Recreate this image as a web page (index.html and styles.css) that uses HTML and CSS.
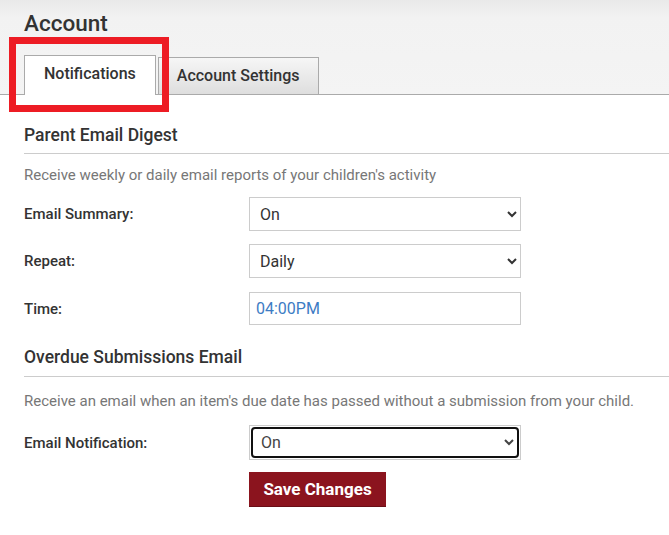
FILE: index.html
```html
<!DOCTYPE html>
<html lang="en">
<head>
<meta charset="utf-8">
<title>Account</title>
<link rel="stylesheet" href="styles.css">
</head>
<body>
<header class="header">
  <h1 class="page-title">Account</h1>
  <ul class="tabs">
    <li class="tab tab-active">Notifications</li>
    <li class="tab">Account Settings</li>
  </ul>
  <div class="highlight"></div>
</header>
<main class="content">
  <section class="section">
    <h2 class="section-title">Parent Email Digest</h2>
    <p class="section-desc">Receive weekly or daily email reports of your children's activity</p>
    <div class="row">
      <label class="row-label">Email Summary:</label>
      <select class="field field-select"><option>On</option><option>Off</option></select>
    </div>
    <div class="row row-tall">
      <label class="row-label">Repeat:</label>
      <select class="field field-select"><option>Daily</option><option>Weekly</option></select>
    </div>
    <div class="row">
      <label class="row-label">Time:</label>
      <input class="field field-input" type="text" value="04:00PM">
    </div>
  </section>
  <section class="section section-second">
    <h2 class="section-title">Overdue Submissions Email</h2>
    <p class="section-desc desc-second">Receive an email when an item's due date has passed without a submission from your child.</p>
    <div class="row row-last">
      <label class="row-label">Email Notification:</label>
      <span class="focus-wrap"><select class="field-select field-focused"><option>On</option><option>Off</option></select></span>
    </div>
    <div class="actions">
      <button class="btn-save" type="button">Save Changes</button>
    </div>
  </section>
</main>
</body>
</html>
```
FILE: styles.css
```css
* { box-sizing: border-box; }
html, body { margin: 0; padding: 0; background: #fff; }
body {
  font-family: Roboto, "Liberation Sans", Arial, sans-serif;
  color: #333;
  width: 669px;
  overflow: hidden;
}
.header {
  position: relative;
  background: linear-gradient(#e9e9e9 0px, #f2f2f2 18px, #f4f4f4 100%);
}
.page-title {
  margin: 0;
  padding: 10px 0 0 24px;
  font-size: 22.5px;
  line-height: 26px;
  font-weight: 500;
  color: #333;
}
.tabs {
  list-style: none;
  margin: 19px 0 0 0;
  padding: 0 0 0 24px;
  display: flex;
  align-items: flex-end;
  gap: 2px;
  border-bottom: 1px solid #aaa;
  height: 40px;
}
.tab {
  border: 1px solid #aaa;
  border-bottom: none;
  padding: 0 18px;
  height: 37px;
  line-height: 36px;
  font-size: 16px;
  font-weight: 500;
  color: #333;
  background: linear-gradient(#f6f6f6, #dedede);
}
.tab-active {
  background: #fff;
  height: 40px;
  line-height: 36px;
  padding: 0 19px 3px;
  margin-bottom: -1px;
}
.highlight {
  position: absolute;
  left: 9px;
  top: 37px;
  width: 160px;
  height: 75px;
  border: 7px solid #ed1c24;
}
.content {
  padding: 0 0 30px 24px;
}
.section-title {
  margin: 28px 0 0 0;
  padding-bottom: 6px;
  border-bottom: 1px solid #ccc;
  font-size: 17.5px;
  line-height: 24px;
  font-weight: 500;
  color: #333;
}
.section-second .section-title { margin-top: 20px; padding-bottom: 7px; }
.section-desc {
  margin: 11px 0 12px;
  font-size: 15px;
  line-height: 20px;
  color: #777;
}
.desc-second { margin-top: 14px; margin-bottom: 14px; }
.row {
  display: flex;
  align-items: center;
  margin-bottom: 13px;
}
.row-tall { margin-bottom: 14px; }
.row-last { margin-bottom: 12px; }
.row-label {
  width: 225px;
  font-size: 15px;
  font-weight: 500;
  color: #333;
}
.field {
  width: 272px;
  height: 34px;
  border: 1px solid #ccc;
  border-radius: 0;
  background: #fff;
  font-family: Roboto, "Liberation Sans", Arial, sans-serif;
  font-size: 16px;
  color: #333;
}
.field-select { padding: 0 6px; }
.field-input {
  height: 33px;
  padding: 0 6px;
  color: #3d7cc4;
  outline: none;
}
.focus-wrap {
  display: inline-block;
  width: 272px;
  height: 35px;
  border: 1px solid #ccc;
  padding: 1px;
}
.field-focused {
  width: 100%;
  height: 31px;
  border: 2px solid #111;
  border-radius: 4px;
  background: #fff;
  font-family: Roboto, "Liberation Sans", Arial, sans-serif;
  font-size: 16px;
  color: #444;
  padding: 0 4px;
}
.actions { padding-left: 225px; }
.btn-save {
  width: 137px;
  height: 35px;
  background: #8b141e;
  border: none;
  border-bottom: 1px solid #6a0e16;
  color: #fff;
  font-family: Roboto, "Liberation Sans", Arial, sans-serif;
  font-size: 17px;
  font-weight: 700;
  padding: 0;
}
```
